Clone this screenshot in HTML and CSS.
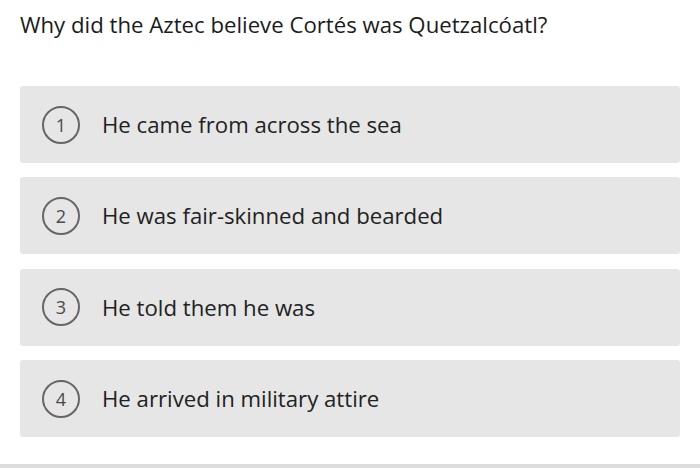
FILE: index.html
```html
<!DOCTYPE html>
<html>
<head>
<meta charset="utf-8">
<link rel="stylesheet" href="styles.css">
</head>
<body>
<div class="page">
  <h1 class="question">Why did the Aztec believe Cortés was Quetzalcóatl?</h1>
  <div class="options">
    <div class="option"><span class="num">1</span><span class="label">He came from across the sea</span></div>
    <div class="option"><span class="num">2</span><span class="label">He was fair-skinned and bearded</span></div>
    <div class="option"><span class="num">3</span><span class="label">He told them he was</span></div>
    <div class="option"><span class="num">4</span><span class="label">He arrived in military attire</span></div>
  </div>
</div>
<div class="footer-line"></div>
</body>
</html>
```
FILE: styles.css
```css
html, body {
  margin: 0;
  padding: 0;
  background: #fff;
}
body {
  font-family: "Open Sans", sans-serif;
  color: #222;
  width: 700px;
  height: 471px;
  overflow: hidden;
}
.page {
  padding: 0 20px 0 20px;
  height: 464px;
}
.question {
  margin: 0;
  padding-top: 9px;
  font-size: 22.2px;
  font-weight: 400;
  line-height: 32px;
  color: #1c1c1c;
}
.options {
  margin-top: 45px;
  display: flex;
  flex-direction: column;
  gap: 14.4px;
}
.option {
  height: 77px;
  background: #e6e6e6;
  border-radius: 3px;
  display: flex;
  align-items: center;
  padding-left: 22px;
}
.num {
  width: 34px;
  height: 34px;
  border: 2px solid #666;
  border-radius: 50%;
  display: flex;
  align-items: center;
  justify-content: center;
  font-size: 18px;
  color: #4a4a4a;
  flex-shrink: 0;
}
.label {
  margin-left: 22px;
  font-size: 22.2px;
  color: #222;
}
.footer-line {
  height: 4px;
  background: #dcdcdc;
}
```
